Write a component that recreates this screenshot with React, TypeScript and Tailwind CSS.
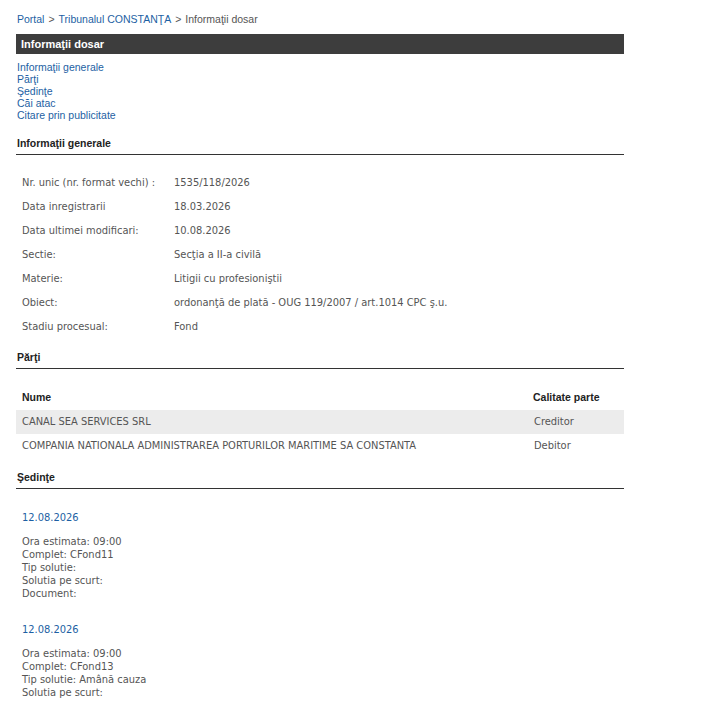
const tahoma = "font-['DejaVu_Sans_Condensed','DejaVu_Sans',sans-serif]";
const arial = "font-['Liberation_Sans',Arial,sans-serif]";

const general: [string, string][] = [
  ["Nr. unic (nr. format vechi) :", "1535/118/2026"],
  ["Data inregistrarii", "18.03.2026"],
  ["Data ultimei modificari:", "10.08.2026"],
  ["Sectie:", "Secţia a II-a civilă"],
  ["Materie:", "Litigii cu profesioniştii"],
  ["Obiect:", "ordonanţă de plată - OUG 119/2007 / art.1014 CPC ş.u."],
  ["Stadiu procesual:", "Fond"],
];

const parti = [
  { nume: "CANAL SEA SERVICES SRL", calitate: "Creditor" },
  { nume: "COMPANIA NATIONALA ADMINISTRAREA PORTURILOR MARITIME SA CONSTANTA", calitate: "Debitor" },
];

const sedinte = [
  {
    data: "12.08.2026",
    rows: ["Ora estimata: 09:00", "Complet: CFond11", "Tip solutie:", "Solutia pe scurt:", "Document:"],
  },
  {
    data: "12.08.2026",
    rows: ["Ora estimata: 09:00", "Complet: CFond13", "Tip solutie: Amână cauza", "Solutia pe scurt:"],
  },
];

function SectionTitle({ children }: { children: React.ReactNode }) {
  return (
    <h3 className={`${arial} text-[10.5px] font-bold text-[#222] border-b border-[#333] pb-[4px] leading-[13px] pl-px`}>
      {children}
    </h3>
  );
}

export default function App() {
  return (
    <div className={`min-h-screen bg-white ${arial} px-4 pt-[13px] pb-6`}>
      <div className="w-[608px]">
        <div className="text-[10.5px] leading-[13px] text-[#555] ml-px">
          <a className="text-[#1d5fa3]">Portal</a>
          <span className="mx-[4px]">&gt;</span>
          <a className="text-[#1d5fa3]">Tribunalul CONSTANŢA</a>
          <span className="mx-[4px]">&gt;</span>
          <span>Informaţii dosar</span>
        </div>

        <div className="mt-[8px] h-[20px] bg-[#3d3d3d] text-white text-[11px] font-bold leading-[20px] px-[5px]">
          Informaţii dosar
        </div>

        <div className="mt-[7px] flex flex-col text-[10.5px] leading-[12px] text-[#1d5fa3] pl-px">
          <a>Informaţii generale</a>
          <a>Părţi</a>
          <a>Şedinţe</a>
          <a>Căi atac</a>
          <a>Citare prin publicitate</a>
        </div>

        <div className="mt-[16px]">
          <SectionTitle>Informaţii generale</SectionTitle>
        </div>

        <div className={`${tahoma} text-[11px] text-[#555] mt-[16px] px-[6px]`}>
          {general.map(([k, v]) => (
            <div key={k} className="flex h-[24px] items-center">
              <div className="w-[152px] shrink-0">{k}</div>
              <div>{v}</div>
            </div>
          ))}
        </div>

        <div className="mt-[12px]">
          <SectionTitle>Părţi</SectionTitle>
        </div>

        <div className="mt-[17px]">
          <div className="flex h-[24px] items-center px-[6px] text-[10.5px] font-bold text-[#222]">
            <div className="flex-1">Nume</div>
            <div className="w-[85px]">Calitate parte</div>
          </div>
          {parti.map((p, i) => (
            <div
              key={p.nume}
              className={`${tahoma} flex h-[24px] items-center px-[6px] text-[11px] text-[#555] ${i === 0 ? "bg-[#ececec]" : ""}`}
            >
              <div className="flex-1">{p.nume}</div>
              <div className="w-[85px] pl-px">{p.calitate}</div>
            </div>
          ))}
        </div>

        <div className="mt-[13px]">
          <SectionTitle>Şedinţe</SectionTitle>
        </div>

        <div className={`${tahoma} text-[11px] leading-[13px] px-[6px]`}>
          {sedinte.map((s, i) => (
            <div key={i} className={i === 0 ? "mt-[22px]" : "mt-[23px]"}>
              <div className="text-[#1d5fa3]">{s.data}</div>
              <div className="mt-[11px] text-[#555] flex flex-col">
                {s.rows.map((r) => (
                  <div key={r}>{r}</div>
                ))}
              </div>
            </div>
          ))}
        </div>
      </div>
    </div>
  );
}
